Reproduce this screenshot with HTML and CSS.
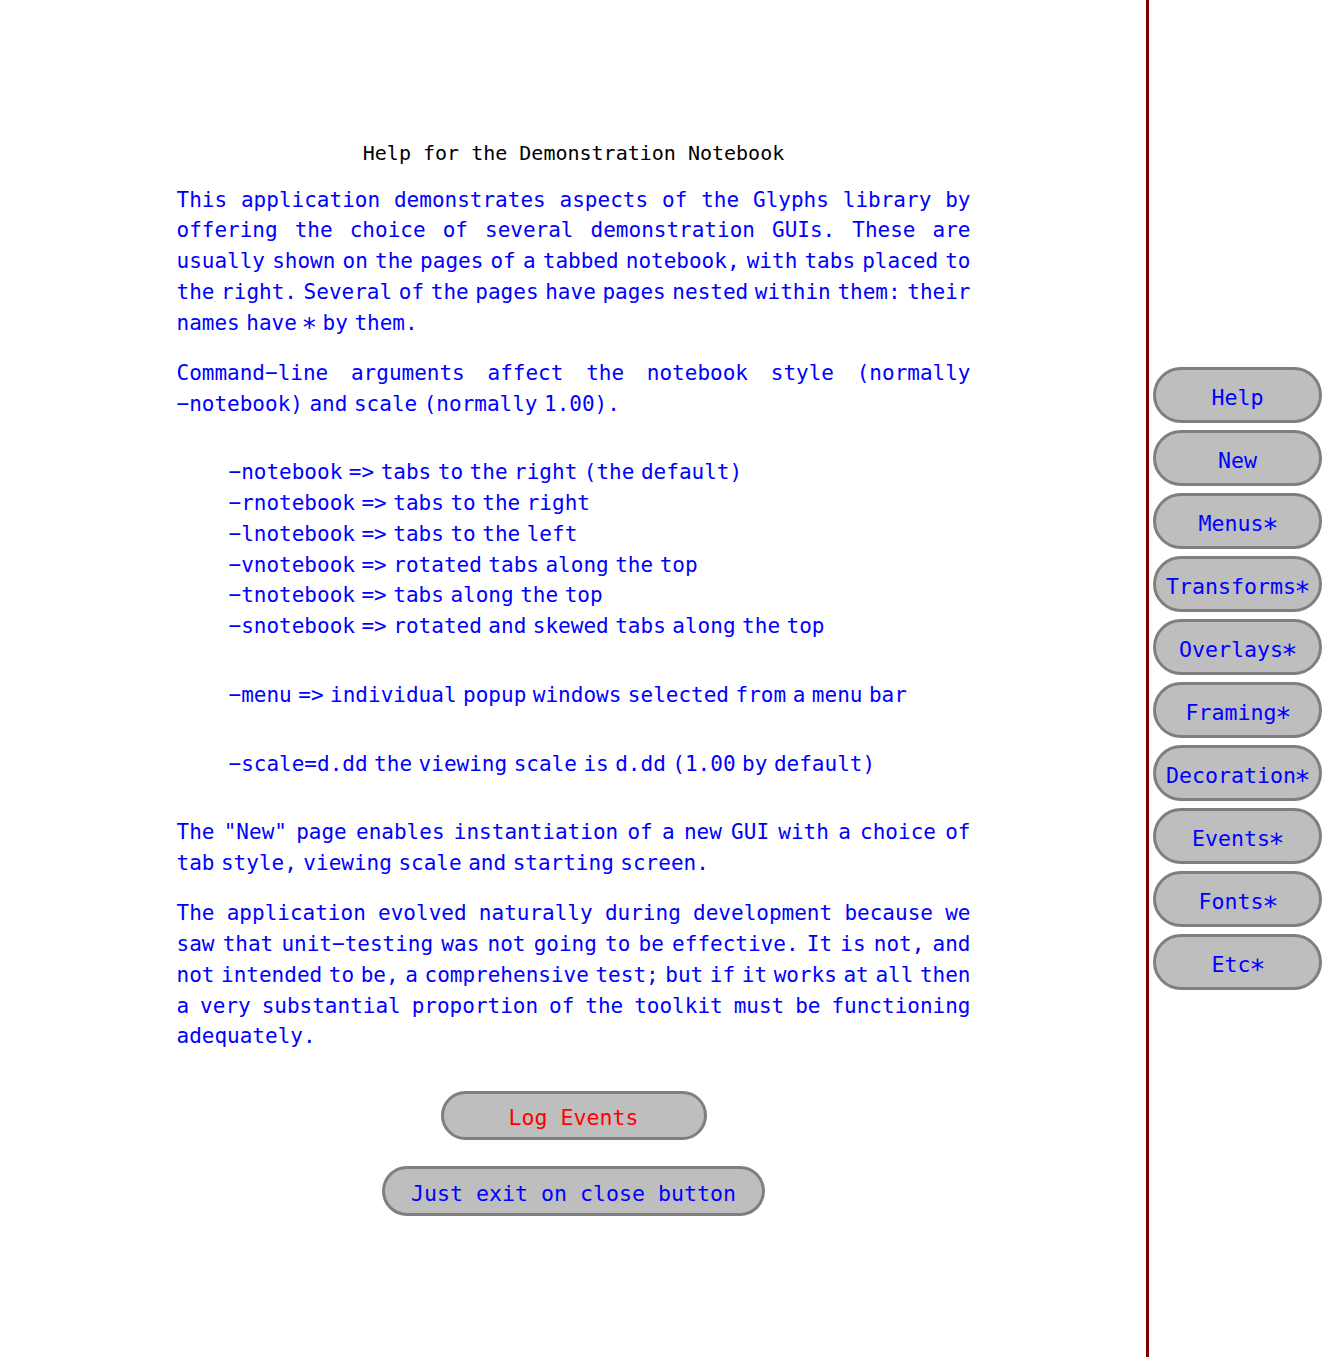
FILE: index.html
```html
<!DOCTYPE html>
<html>
<head>
<meta charset="utf-8">
<link rel="stylesheet" href="styles.css">
<title>Demonstration Notebook</title>
</head>
<body>
<div class="app">
  <main class="page">
    <div class="column">
      <h1 class="title">Help for the Demonstration Notebook</h1>
      <div class="para">
        <span class="ln jl">This application demonstrates aspects of the Glyphs library by</span>
        <span class="ln jl">offering the choice of several demonstration GUIs. These are</span>
        <span class="ln jl">usually shown on the pages of a tabbed notebook, with tabs placed to</span>
        <span class="ln jl">the right. Several of the pages have pages nested within them: their</span>
        <span class="ln">names have <span class="ast">∗</span> by them.</span>
      </div>
      <div class="para">
        <span class="ln jl">Command−line arguments affect the notebook style (normally</span>
        <span class="ln">−notebook) and scale (normally 1.00).</span>
      </div>
      <div class="para gap indent">
        <span class="ln">−notebook =&gt; tabs to the right (the default)</span>
        <span class="ln">−rnotebook =&gt; tabs to the right</span>
        <span class="ln">−lnotebook =&gt; tabs to the left</span>
        <span class="ln">−vnotebook =&gt; rotated tabs along the top</span>
        <span class="ln">−tnotebook =&gt; tabs along the top</span>
        <span class="ln">−snotebook =&gt; rotated and skewed tabs along the top</span>
      </div>
      <div class="para gap indent">
        <span class="ln">−menu =&gt; individual popup windows selected from a menu bar</span>
      </div>
      <div class="para gap indent">
        <span class="ln">−scale=d.dd the viewing scale is d.dd (1.00 by default)</span>
      </div>
      <div class="para gap">
        <span class="ln jl">The "New" page enables instantiation of a new GUI with a choice of</span>
        <span class="ln">tab style, viewing scale and starting screen.</span>
      </div>
      <div class="para">
        <span class="ln jl">The application evolved naturally during development because we</span>
        <span class="ln jl">saw that unit−testing was not going to be effective. It is not, and</span>
        <span class="ln jl">not intended to be, a comprehensive test; but if it works at all then</span>
        <span class="ln jl">a very substantial proportion of the toolkit must be functioning</span>
        <span class="ln">adequately.</span>
      </div>
      <div class="actions">
        <button class="pill pill-log">Log Events</button>
        <button class="pill pill-exit">Just exit on close button</button>
      </div>
    </div>
  </main>
  <nav class="tabs">
    <button class="tab">Help</button>
    <button class="tab">New</button>
    <button class="tab">Menus<span class="ast">∗</span></button>
    <button class="tab">Transforms<span class="ast">∗</span></button>
    <button class="tab">Overlays<span class="ast">∗</span></button>
    <button class="tab">Framing<span class="ast">∗</span></button>
    <button class="tab">Decoration<span class="ast">∗</span></button>
    <button class="tab">Events<span class="ast">∗</span></button>
    <button class="tab">Fonts<span class="ast">∗</span></button>
    <button class="tab">Etc<span class="ast">∗</span></button>
  </nav>
</div>
</body>
</html>
```

FILE: styles.css
```css
html, body {
  margin: 0;
  padding: 0;
  background: #ffffff;
}

body {
  font-family: "DejaVu Sans Mono", "Liberation Mono", monospace;
  color: #0000ff;
}

.app {
  display: flex;
  min-height: 1357px;
}

.page {
  width: 1146px;
  flex: none;
  display: flex;
  justify-content: center;
}

.column {
  width: 794px;
  padding-top: 141px;
  margin-left: 1px;
}

.title {
  margin: 0;
  font-size: 20px;
  font-weight: normal;
  line-height: 24px;
  height: 24px;
  color: #000000;
  text-align: center;
}

.para {
  margin-top: 19.5px;
  font-size: 21px;
  line-height: 30.75px;
  word-spacing: -6.1px;
}

.para.gap {
  margin-top: 38px;
}

.indent {
  padding-left: 52px;
}

.ln {
  display: block;
  white-space: nowrap;
}

.ln.jl {
  text-align: justify;
  text-align-last: justify;
}

.ast {
  display: inline-block;
  transform: scale(1.25);
  transform-origin: 50% 60%;
}

.actions {
  margin-top: 39px;
  display: flex;
  flex-direction: column;
  align-items: center;
  gap: 26px;
}

.pill {
  font-family: "DejaVu Sans Mono", "Liberation Mono", monospace;
  font-size: 21.6px;
  background: #bebebe;
  border: 3px solid #7f7f7f;
  border-radius: 30px;
  padding: 4px 0 0 0;
  color: #0000ff;
  display: flex;
  align-items: center;
  justify-content: center;
  box-sizing: border-box;
}

.pill-log {
  width: 266px;
  height: 49px;
  color: #ff0000;
}

.pill-exit {
  width: 383px;
  height: 50px;
}

.tabs {
  border-left: 3px solid #800000;
  padding-top: 367px;
  padding-left: 4px;
  display: flex;
  flex-direction: column;
  gap: 7px;
}

.tab {
  width: 169px;
  height: 56px;
  box-sizing: border-box;
  font-family: "DejaVu Sans Mono", "Liberation Mono", monospace;
  font-size: 21.6px;
  color: #0000ff;
  background: #bebebe;
  border: 3px solid #7f7f7f;
  border-radius: 28px;
  padding: 5px 0 0 0;
  display: flex;
  align-items: center;
  justify-content: center;
}
```
